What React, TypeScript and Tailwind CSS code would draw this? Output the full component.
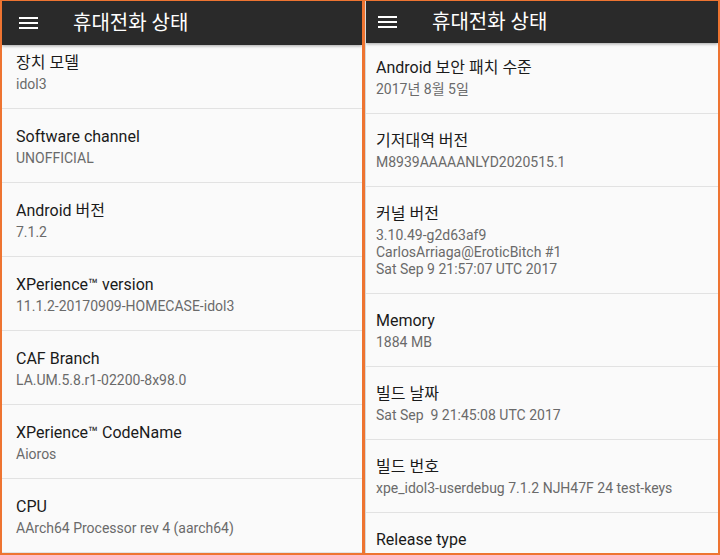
import React from 'react';

type Item = { title: string; lines: string[] };

const leftItems: Item[] = [
  { title: '장치 모델', lines: ['idol3'] },
  { title: 'Software channel', lines: ['UNOFFICIAL'] },
  { title: 'Android 버전', lines: ['7.1.2'] },
  { title: 'XPerience™ version', lines: ['11.1.2-20170909-HOMECASE-idol3'] },
  { title: 'CAF Branch', lines: ['LA.UM.5.8.r1-02200-8x98.0'] },
  { title: 'XPerience™ CodeName', lines: ['Aioros'] },
  { title: 'CPU', lines: ['AArch64 Processor rev 4 (aarch64)'] },
];

const rightItems: Item[] = [
  { title: 'Android 보안 패치 수준', lines: ['2017년 8월 5일'] },
  { title: '기저대역 버전', lines: ['M8939AAAAANLYD2020515.1'] },
  {
    title: '커널 버전',
    lines: ['3.10.49-g2d63af9', 'CarlosArriaga@EroticBitch #1', 'Sat Sep 9 21:57:07 UTC 2017'],
  },
  { title: 'Memory', lines: ['1884 MB'] },
  { title: '빌드 날짜', lines: ['Sat Sep  9 21:45:08 UTC 2017'] },
  { title: '빌드 번호', lines: ['xpe_idol3-userdebug 7.1.2 NJH47F 24 test-keys'] },
  { title: 'Release type', lines: [] },
];

const font = { fontFamily: 'Roboto, "Noto Sans CJK KR", sans-serif' };

const Hamburger = () => (
  <svg width="19" height="12" viewBox="0 0 19 12" className="shrink-0">
    <rect x="0" y="0" width="19" height="2" fill="#ffffff" />
    <rect x="0" y="5" width="19" height="2" fill="#ffffff" />
    <rect x="0" y="10" width="19" height="2" fill="#ffffff" />
  </svg>
);

const Row: React.FC<{ item: Item; compact?: boolean; pad: string }> = ({ item, compact, pad }) => (
  <div className={`border-b border-[#e2e2e2] ${pad} ${compact ? 'pt-[16px] pb-[15px]' : 'pt-[17px] pb-[15px]'}`}>
    <div className="text-[16px] leading-[22px] text-[#1a1a1a] whitespace-nowrap">{item.title}</div>
    <div className="mt-[2px]">
      {item.lines.map((l, i) => (
        <div key={i} className="text-[14px] leading-[17px] text-[#6a6a6a] whitespace-pre">
          {l}
        </div>
      ))}
    </div>
  </div>
);

const Panel: React.FC<{
  items: Item[];
  headerH: string;
  offset: string;
  compact?: boolean;
  menuPad: string;
  rowPad: string;
}> = ({ items, headerH, offset, compact, menuPad, rowPad }) => (
  <div className="flex h-full flex-col overflow-hidden bg-[#fafafa]">
    <div
      className={`relative z-10 flex shrink-0 items-center bg-[#2a2a2a] shadow-[0_1px_3px_rgba(0,0,0,0.35)] ${headerH} ${menuPad}`}
    >
      <Hamburger />
      <span className="ml-[35px] text-[20px] leading-none text-white">휴대전화 상태</span>
    </div>
    <div className="flex-1 overflow-hidden">
      <div className={offset}>
        {items.map((it, i) => (
          <Row key={i} item={it} compact={compact} pad={rowPad} />
        ))}
      </div>
    </div>
  </div>
);

export default function App() {
  return (
    <div style={font} className="flex h-[555px] w-[720px] gap-[3px] bg-[#ee7431] pb-[2px] pl-[2px] pr-[2px] pt-[1px]">
      <div className="h-full w-[360px] shrink-0">
        <Panel
          items={leftItems}
          headerH="h-[44px]"
          offset="-mt-[10px]"
          menuPad="pl-[17px]"
          rowPad="pl-[14px]"
        />
      </div>
      <div className="h-full flex-1 border-l border-[#d8d8d8]">
        <Panel
          items={rightItems}
          headerH="h-[42px]"
          offset="-mt-[2px]"
          compact
          menuPad="pl-[12px]"
          rowPad="pl-[10px]"
        />
      </div>
    </div>
  );
}
